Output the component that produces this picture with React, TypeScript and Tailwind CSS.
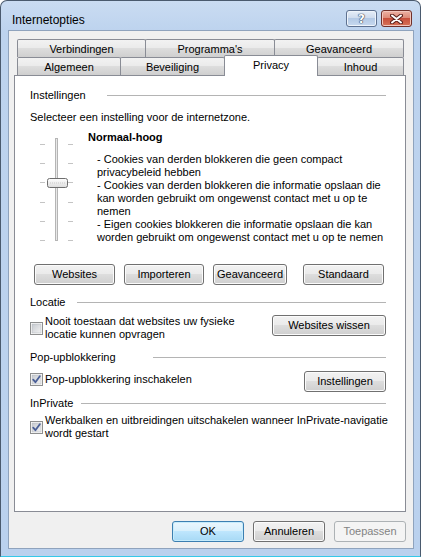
import React from "react";

type BtnProps = {
  children: React.ReactNode;
  className?: string;
  variant?: "normal" | "default" | "disabled";
};

function Btn({ children, className = "", variant = "normal" }: BtnProps) {
  const look =
    variant === "default"
      ? "border-[#3c7fb1] bg-[linear-gradient(#eaf6fd,#d9f0fc_45%,#bee6fd_50%,#a7d9f5)] shadow-[inset_0_0_0_1px_#c6ecfc] text-black"
      : variant === "disabled"
        ? "border-[#adb2b5] bg-[#f4f4f4] text-[#838383]"
        : "border-[#707070] bg-[linear-gradient(#f2f2f2,#ebebeb_45%,#dddddd_50%,#cfcfcf)] shadow-[inset_0_0_0_1px_#fbfbfb] text-black";
  return (
    <div className={`h-[21px] flex items-center justify-center rounded-[3px] border ${look} ${className}`}>
      {children}
    </div>
  );
}

function CheckBox({ checked = false }: { checked?: boolean }) {
  return (
    <svg width="13" height="13" viewBox="0 0 13 13" className="shrink-0">
      <defs>
        <linearGradient id={checked ? "cbOn" : "cbOff"} x1="0" y1="0" x2="1" y2="1">
          <stop offset="0" stopColor="#c6cad0" />
          <stop offset="1" stopColor="#f2f2f2" />
        </linearGradient>
      </defs>
      <rect x="0.5" y="0.5" width="12" height="12" fill="#fff" stroke="#8e8f8f" />
      <rect x="2" y="2" width="9" height="9" fill={`url(#${checked ? "cbOn" : "cbOff"})`} stroke="#aeb3b9" strokeWidth="0.5" />
      {checked && (
        <path d="M3.2 6.6 L5.4 9.2 L9.8 3.2" fill="none" stroke="#4a5f97" strokeWidth="1.8" strokeLinecap="round" strokeLinejoin="round" />
      )}
    </svg>
  );
}

function GroupHead({ label, w }: { label: string; w: string }) {
  return (
    <div className="flex items-center h-[13px]">
      <div className={`${w} shrink-0 whitespace-nowrap`}>{label}</div>
      <div className="flex-1 h-px bg-[#b4b4b4]" />
    </div>
  );
}

function Tab({ label, w, selected = false }: { label: string; w: string; selected?: boolean }) {
  if (selected) {
    return (
      <div className={`${w} h-[21px] -mb-px -ml-px relative z-10 flex justify-center pt-[3px] border border-b-0 border-[#898c95] rounded-t-[2px] bg-white`}>
        {label}
      </div>
    );
  }
  return (
    <div className={`${w} h-[18px] -ml-px first:ml-0 flex items-center justify-center pt-px border border-b-0 border-[#898c95] rounded-t-[2px] bg-[linear-gradient(#f2f2f2,#ebebeb_45%,#dddddd_50%,#cfcfcf)]`}>
      {label}
    </div>
  );
}

function PrivacySlider() {
  const ticks = [8, 27, 46, 66, 85, 104];
  return (
    <svg width="58" height="108" viewBox="0 0 58 108" className="shrink-0 mt-[5px]">
      <defs>
        <linearGradient id="thumb" x1="0" y1="0" x2="0" y2="1">
          <stop offset="0" stopColor="#ffffff" />
          <stop offset="1" stopColor="#dcdcdc" />
        </linearGradient>
      </defs>
      {ticks.map((y) => (
        <g key={y}>
          <rect x="10" y={y} width="5" height="1" fill="#c4c4c4" />
          <rect x="38" y={y} width="5" height="1" fill="#c4c4c4" />
        </g>
      ))}
      <rect x="25.5" y="2.5" width="2" height="102" fill="#e8e8e8" stroke="#b5b5b5" />
      <rect x="17.5" y="42.5" width="20" height="9" rx="2" fill="url(#thumb)" stroke="#6e6e6e" />
      <line x1="20" y1="47" x2="35" y2="47" stroke="#c9c9c9" strokeDasharray="1 1" />
    </svg>
  );
}

export default function App() {
  return (
    <div className="w-[423px] h-[559px] bg-white font-['Liberation_Sans',Arial,sans-serif] text-[11px] leading-[13px] text-black">
      <div className="w-[421px] h-[557px] flex flex-col rounded-t-[7px] border border-[#4a5a6e] border-b-[#35c8e8] bg-[linear-gradient(#cadcf2,#bdd3ee_30px,#bad1ee)]">
        {/* title bar */}
        <div className="h-[29px] flex items-start pl-[11px] pr-[8px]">
          <span className="text-[12px] mt-[12px] leading-[14px]">Internetopties</span>
          <div className="ml-auto mt-[9px] flex gap-[4px]">
            <div className="w-[31px] h-[17px] rounded-[3px] border border-[#5e7190] bg-[linear-gradient(#e6eef8,#cfdcee_45%,#b3c9e5_50%,#c8daef)] shadow-[inset_0_0_0_1px_#eef4fb] flex items-center justify-center">
              <span className="font-['DejaVu_Sans',sans-serif] font-bold text-[12px] leading-[12px] text-white [text-shadow:0_0_1px_#2b3a52,0_0_1px_#2b3a52,0_0_1px_#2b3a52]">?</span>
            </div>
            <div className="w-[31px] h-[17px] rounded-[3px] border border-[#70302a] bg-[linear-gradient(#eeb2a4,#dd8b79_45%,#c8503c_50%,#d77358)] shadow-[inset_0_0_0_1px_#f2c6bc] flex items-center justify-center">
              <svg width="13" height="10" viewBox="0 0 13 10">
                <path d="M2 1.5 L11 8.5 M11 1.5 L2 8.5" stroke="#5a1f1a" strokeWidth="4" strokeLinecap="round" />
                <path d="M2 1.5 L11 8.5 M11 1.5 L2 8.5" stroke="#ffffff" strokeWidth="2" strokeLinecap="round" />
              </svg>
            </div>
          </div>
        </div>

        {/* client area */}
        <div className="ml-[7px] w-[406px] h-[519px] border border-[#8fa3bd] bg-[#f0f0f0] pl-[5px] pt-[8px] flex flex-col">
          {/* tabs */}
          <div className="w-[392px]">
            <div className="flex h-[18px] pl-[3px]">
              <Tab label="Verbindingen" w="w-[129px]" />
              <Tab label="Programma's" w="w-[130px]" />
              <Tab label="Geavanceerd" w="w-[130px]" />
            </div>
            <div className="flex items-end h-[18px] pl-[3px]">
              <Tab label="Algemeen" w="w-[104px]" />
              <Tab label="Beveiliging" w="w-[105px]" />
              <Tab label="Privacy" w="w-[94px]" selected />
              <Tab label="Inhoud" w="w-[87px]" />
            </div>
          </div>

          {/* tab page */}
          <div className="w-[392px] h-[437px] border border-[#898c95] bg-white pl-[15px] pr-[19px] pt-[13px] flex flex-col">
            <GroupHead label="Instellingen" w="w-[77px]" />
            <div className="mt-[9px] h-[13px]">Selecteer een instelling voor de internetzone.</div>

            <div className="mt-[7px] flex">
              <PrivacySlider />
              <div className="flex flex-col">
                <div className="h-[13px] font-bold">Normaal-hoog</div>
                <div className="mt-[9px] pl-[9px] whitespace-nowrap">
                  <div>- Cookies van derden blokkeren die geen compact</div>
                  <div>privacybeleid hebben</div>
                  <div>- Cookies van derden blokkeren die informatie opslaan die</div>
                  <div>kan worden gebruikt om ongewenst contact met u op te</div>
                  <div>nemen</div>
                  <div>- Eigen cookies blokkeren die informatie opslaan die kan</div>
                  <div>worden gebruikt om ongewenst contact met u op te nemen</div>
                </div>
              </div>
            </div>

            <div className="mt-[20px] flex">
              <Btn className="ml-[4px] w-[81px]">Websites</Btn>
              <Btn className="ml-[9px] w-[80px]">Importeren</Btn>
              <Btn className="ml-[9px] w-[74px]">Geavanceerd</Btn>
              <Btn className="ml-[16px] w-[81px]">Standaard</Btn>
            </div>

            <div className="mt-[11px]">
              <GroupHead label="Locatie" w="w-[47px]" />
            </div>
            <div className="mt-[6px] flex items-start justify-between">
              <div className="flex items-center gap-[2px]">
                <CheckBox />
                <div className="whitespace-nowrap">
                  <div>Nooit toestaan dat websites uw fysieke</div>
                  <div>locatie kunnen opvragen</div>
                </div>
              </div>
              <Btn className="w-[114px]">Websites wissen</Btn>
            </div>

            <div className="mt-[10px]">
              <GroupHead label="Pop-upblokkering" w="w-[123px]" />
            </div>
            <div className="mt-[7px] flex items-start justify-between">
              <div className="mt-[2px] flex items-center gap-[2px]">
                <CheckBox checked />
                <div className="whitespace-nowrap">Pop-upblokkering inschakelen</div>
              </div>
              <Btn className="w-[82px]">Instellingen</Btn>
            </div>

            <div className="mt-[5px]">
              <GroupHead label="InPrivate" w="w-[51px]" />
            </div>
            <div className="mt-[4px] flex items-center gap-[2px]">
              <CheckBox checked />
              <div className="whitespace-nowrap">
                <div>Werkbalken en uitbreidingen uitschakelen wanneer InPrivate-navigatie</div>
                <div>wordt gestart</div>
              </div>
            </div>
          </div>

          {/* dialog buttons */}
          <div className="w-[392px] mt-[9px] flex justify-end gap-[9px]">
            <Btn variant="default" className="w-[72px]">OK</Btn>
            <Btn className="w-[72px]">Annuleren</Btn>
            <Btn variant="disabled" className="w-[72px]">Toepassen</Btn>
          </div>
        </div>
      </div>
    </div>
  );
}
